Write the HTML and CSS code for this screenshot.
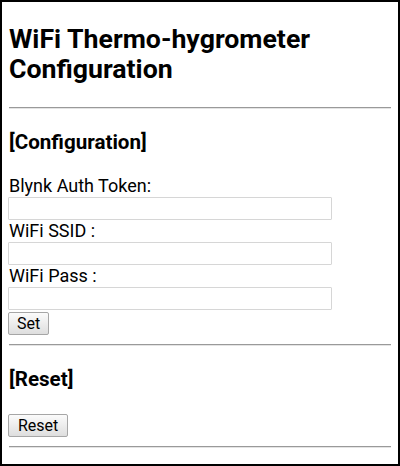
FILE: index.html
```html
<!DOCTYPE html>
<html lang="en">
<head>
    <meta charset="UTF-8">
    <meta name="viewport" content="width=device-width, initial-scale=1.0">
    <title>WiFi Thermo-hygrometer Configuration</title>
    <link rel="stylesheet" href="styles.css">
</head>
<body>
    <div class="frame">
        <h1>WiFi Thermo-hygrometer Configuration</h1>
        <hr>
        <h2>[Configuration]</h2>
        <form class="config-form">
            <label for="token">Blynk Auth Token:</label>
            <input type="text" id="token" name="token">
            <label for="ssid">WiFi SSID :</label>
            <input type="text" id="ssid" name="ssid">
            <label for="pass">WiFi Pass :</label>
            <input type="text" id="pass" name="pass">
            <button type="button" class="btn set-btn">Set</button>
        </form>
        <hr>
        <h2>[Reset]</h2>
        <form class="reset-form">
            <button type="button" class="btn">Reset</button>
        </form>
        <hr>
    </div>
</body>
</html>
```

FILE: styles.css
```css
html, body {
    margin: 0;
    background: #fff;
}
body {
    font-family: Roboto, "Liberation Sans", Arial, sans-serif;
    color: #000;
}
.frame {
    box-sizing: border-box;
    width: 400px;
    height: 466px;
    border: 2px solid #000;
    padding: 0 7px;
    overflow: hidden;
}
h1 {
    font-size: 26.7px;
    line-height: 30px;
    font-weight: 700;
    margin: 22px 0 23px;
}
h2 {
    font-size: 20.6px;
    line-height: 24px;
    font-weight: 700;
    margin: 21px 0;
}
hr {
    margin: 0;
    border: 0;
    border-top: 1px solid #9a9a9a;
    border-bottom: 1px solid #e4e4e4;
}
.config-form {
    margin: 0;
}
.config-form label {
    display: block;
    font-size: 18px;
    line-height: 22px;
}
.config-form input {
    display: block;
    box-sizing: border-box;
    width: 324px;
    height: 23px;
    margin: 0 0 0 -1px;
    padding: 0 4px;
    border: 1px solid #d6d6d6;
    border-radius: 1px;
    font-size: 16px;
}
.btn {
    display: block;
    box-sizing: border-box;
    height: 23px;
    margin-left: -1px;
    padding: 0 8px;
    font-family: Roboto, "Liberation Sans", Arial, sans-serif;
    font-size: 16px;
    line-height: 21px;
    color: #000;
    background: linear-gradient(#fbfbfb, #dedede);
    border: 1px solid #a6a6a6;
    border-radius: 2px;
}
.set-btn {
    margin-top: 2px;
    margin-bottom: 9px;
}
.reset-form {
    margin: 0;
    padding: 0 0 9px;
}
.reset-form .btn {
    margin-top: 23px;
    padding: 0 9px;
}
```
